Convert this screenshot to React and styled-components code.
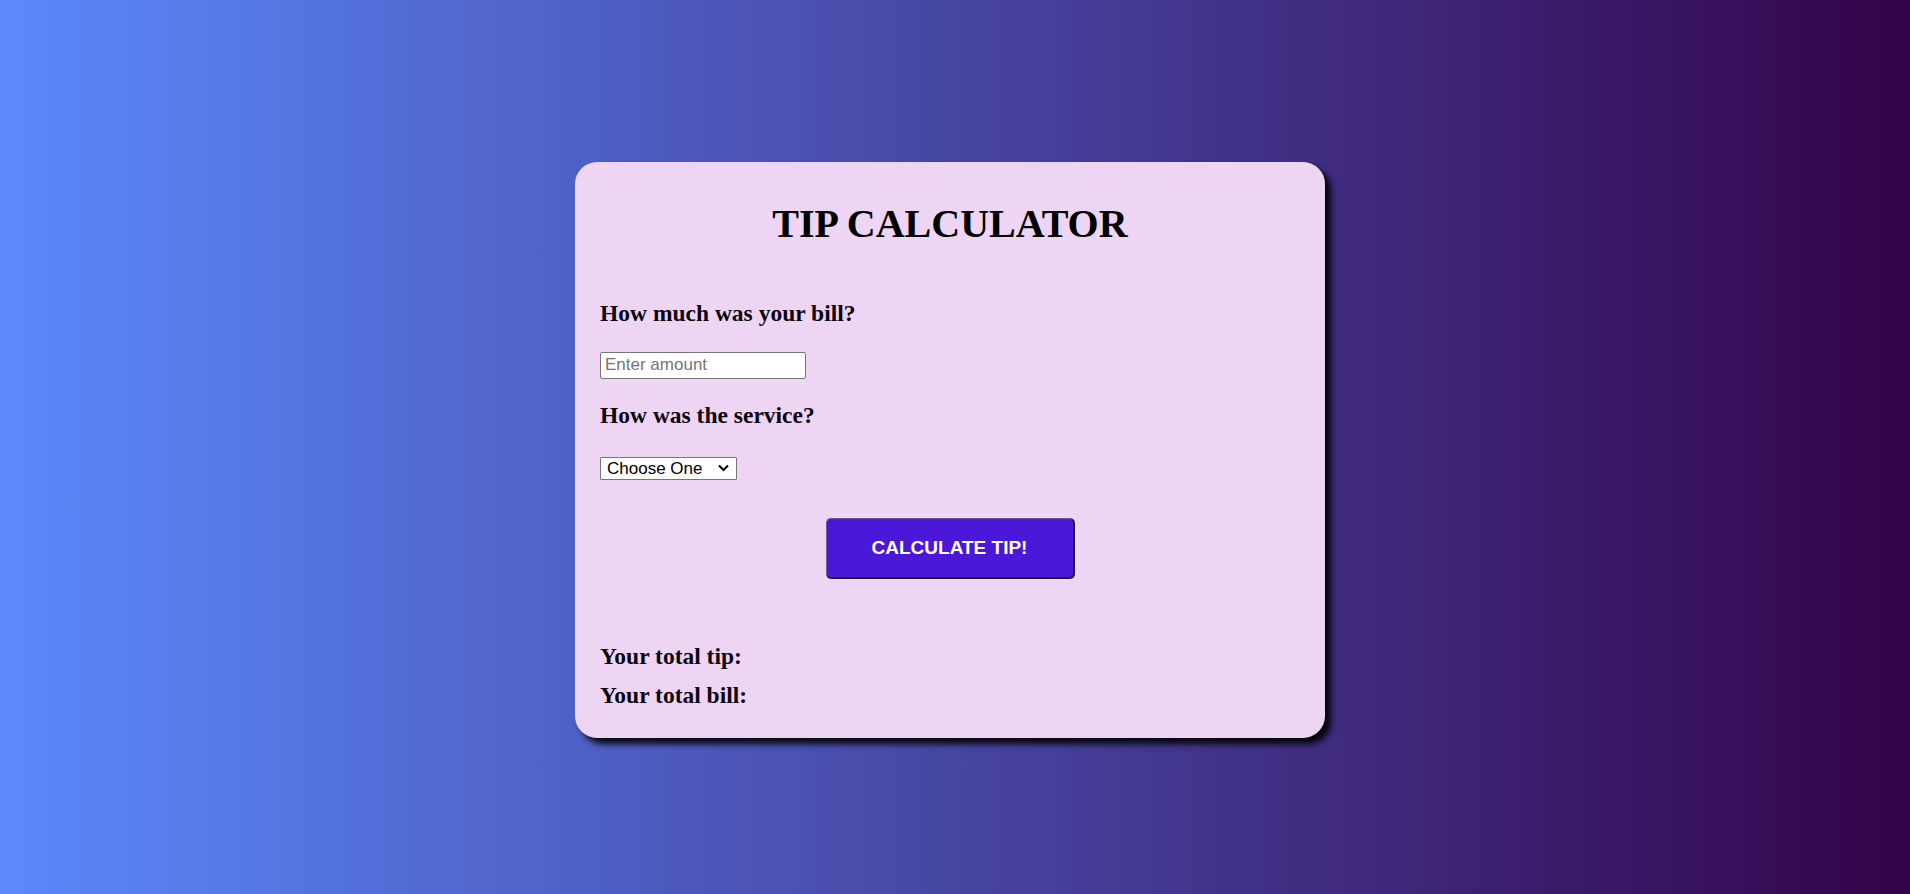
import React from "react";
import styled, { createGlobalStyle } from "styled-components";

const Global = createGlobalStyle`
  html, body { margin: 0; padding: 0; }
  body {
    font-family: "Liberation Serif", "Times New Roman", serif;
    background: linear-gradient(to right, #5b89fb, #33034a);
    min-height: 100vh;
  }
`;

const Page = styled.main`
  height: 894px;
  display: flex;
  align-items: center;
  justify-content: center;
`;

const Card = styled.section`
  box-sizing: border-box;
  width: 750px;
  margin-right: 10px;
  margin-top: 5px;
  padding: 0 25px 30px;
  background: #edd5f3;
  border-radius: 22px;
  box-shadow: 6px 6px 6px rgba(0, 0, 0, 0.92);
  display: flex;
  flex-direction: column;
  color: #000;
`;

const Title = styled.h1`
  margin: 39px 0 0;
  font-family: "Liberation Serif", "Times New Roman", serif;
  font-size: 40px;
  line-height: 46px;
  font-weight: 700;
  text-align: center;
`;

const Label = styled.h3`
  margin: ${(p) => p.$mt}px 0 0;
  font-family: "Liberation Serif", "Times New Roman", serif;
  font-size: 23.5px;
  line-height: 26px;
  font-weight: 700;
  color: #0c0510;
`;

const AmountInput = styled.input`
  box-sizing: border-box;
  margin-top: 26px;
  width: 206px;
  height: 27px;
  padding: 1px 4px;
  border: 1px solid #767676;
  border-radius: 2px;
  background: #fff;
  font-family: "Liberation Sans", Arial, sans-serif;
  font-size: 17px;
  color: #000;
  &::placeholder { color: #757575; }
`;

const SelectWrap = styled.div`
  position: relative;
  margin-top: 29px;
  width: 137px;
  height: 23px;
  align-self: flex-start;
`;

const ServiceSelect = styled.select`
  box-sizing: border-box;
  appearance: none;
  -webkit-appearance: none;
  width: 100%;
  height: 100%;
  margin: 0;
  padding: 0 20px 0 6px;
  border: 1px solid #767676;
  border-radius: 1px;
  background: #fff;
  font-family: "Liberation Sans", Arial, sans-serif;
  font-size: 17px;
  color: #000;
  cursor: pointer;
`;

const Chevron = styled.svg`
  position: absolute;
  right: 8px;
  top: 7px;
  width: 11px;
  height: 8px;
  pointer-events: none;
`;

const CalcButton = styled.button`
  box-sizing: border-box;
  align-self: center;
  margin-top: 38px;
  width: 249px;
  height: 61px;
  background: #4b18d9;
  color: #fff;
  border: 1px solid;
  border-color: #6d5a92 #241540 #241540 #6d5a92;
  border-bottom-width: 2px;
  border-right-width: 2px;
  border-radius: 5px;
  font-family: "Liberation Sans", Arial, sans-serif;
  font-size: 19px;
  font-weight: 700;
  cursor: pointer;
`;

export default function App() {
  return (
    <>
      <Global />
      <Page>
        <Card>
          <Title>TIP CALCULATOR</Title>
          <Label $mt={53}>How much was your bill?</Label>
          <AmountInput type="text" placeholder="Enter amount" />
          <Label $mt={23}>How was the service?</Label>
          <SelectWrap>
            <ServiceSelect defaultValue="0">
              <option value="0">Choose One</option>
              <option value="0.3">30% - Outstanding</option>
              <option value="0.2">20% - Good</option>
              <option value="0.15">15% - It was OK</option>
              <option value="0.1">10% - Bad</option>
              <option value="0.05">5% - Terrible</option>
            </ServiceSelect>
            <Chevron viewBox="0 0 11 8" aria-hidden="true">
              <path d="M1 1.5 L5.5 6 L10 1.5" fill="none" stroke="#000" strokeWidth="2" />
            </Chevron>
          </SelectWrap>
          <CalcButton type="button">CALCULATE TIP!</CalcButton>
          <Label $mt={64}>Your total tip:</Label>
          <Label $mt={13}>Your total bill:</Label>
        </Card>
      </Page>
    </>
  );
}
